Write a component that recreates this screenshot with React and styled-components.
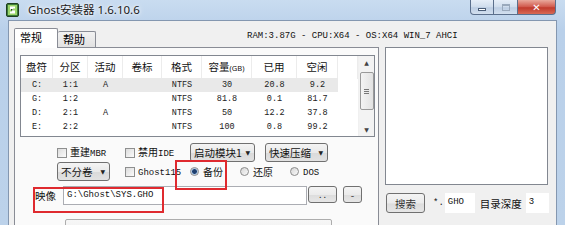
import React from 'react'
import styled, { createGlobalStyle } from 'styled-components'

const GlobalStyle = createGlobalStyle`
  html, body { margin: 0; padding: 0; overflow: hidden; background: #bcd2ea; }
  * { box-sizing: border-box; }
`

const CJK = `"Noto Sans CJK SC", "Noto Sans", sans-serif`
const MONO = `"Liberation Mono", "DejaVu Sans Mono", "Noto Sans CJK SC", monospace`

const Window = styled.div`
  width: 565px;
  height: 225px;
  overflow: hidden;
  display: flex;
  flex-direction: column;
  background: linear-gradient(#c9dcf0, #b9d0ea 30px, #bcd2ea);
  font-family: ${CJK};
  color: #111;
`

const TitleBar = styled.div`
  height: 20px;
  flex: none;
  display: flex;
  align-items: flex-start;
`

const AppIcon = styled.svg`
  margin: 3px 0 0 6px;
  flex: none;
`

const Title = styled.div`
  margin-left: 9px;
  line-height: 20px;
  font-size: 11.5px;
  font-family: "Noto Sans", ${CJK};
  color: #1a1a1a;
  text-shadow: 0 0 6px #fff, 0 0 3px #fff;
`

const Controls = styled.div`
  margin-left: auto;
  margin-right: 9px;
  display: flex;
`

const CtrlBtn = styled.div`
  width: ${p => p.$w}px;
  height: 15px;
  border: 1px solid #5b6f8c;
  border-top: none;
  border-left: ${p => (p.$first ? '1px solid #5b6f8c' : 'none')};
  border-radius: ${p => (p.$first ? '0 0 0 4px' : p.$close ? '0 0 4px 0' : '0')};
  background: ${p =>
    p.$close
      ? 'linear-gradient(#e9a99c, #d0574a 50%, #c03a2c 55%, #d86a55)'
      : 'linear-gradient(#e6eef8, #cfdcec 50%, #bccde3 55%, #d3e0ef)'};
  display: flex;
  align-items: center;
  justify-content: center;
  font-family: "DejaVu Sans", sans-serif;
  font-size: ${p => (p.$close ? 10 : 8)}px;
  font-weight: bold;
  color: ${p => (p.$close ? '#fff' : '#3b4d66')};
`

const MinGlyph = styled.span`
  width: 8px;
  height: 3px;
  margin-top: 4px;
  background: #fff;
  border: 1px solid #4a5d78;
`

const MaxGlyph = styled.span`
  width: 8px;
  height: 7px;
  border: 1px solid #9aa9bc;
  border-top-width: 2px;
`

const Frame = styled.div`
  flex: 1;
  padding: 0 8px;
  display: flex;
`

const Body = styled.div`
  flex: 1;
  background: #f0f0f0;
  border: 1px solid #8497b0;
  border-bottom: none;
  display: flex;
  flex-direction: column;
  padding: 0 8px 0 5px;
`

const TopRow = styled.div`
  height: 26px;
  display: flex;
  align-items: flex-end;
  flex: none;
`

const Tab = styled.div`
  width: ${p => p.$w}px;
  height: ${p => (p.$active ? 20 : 16)}px;
  border: 1px solid #898c95;
  border-bottom: none;
  border-left: ${p => (p.$active ? '1px solid #898c95' : 'none')};
  background: ${p => (p.$active ? '#ffffff' : 'linear-gradient(#f2f2f2, #e1e1e1)')};
  margin-bottom: ${p => (p.$active ? -1 : 0)}px;
  position: relative;
  z-index: ${p => (p.$active ? 2 : 1)};
  border-radius: 2px 2px 0 0;
  font-size: 11px;
  line-height: ${p => (p.$active ? 17 : 15)}px;
  padding-left: 5px;
  color: #000;
`

const SysInfo = styled.div`
  margin-left: 151px;
  margin-bottom: 5px;
  font-family: ${MONO};
  font-size: 9px;
  line-height: 12px;
  white-space: nowrap;
  color: #111;
`

const MainRow = styled.div`
  flex: 1;
  display: flex;
  gap: 6px;
`

const Pane = styled.div`
  width: 365px;
  flex: none;
  border: 1px solid #898c95;
  border-bottom: none;
  background: #fafafa;
  padding: 7px 3px 0 5px;
  display: flex;
  flex-direction: column;
`

const ListView = styled.div`
  height: 82px;
  border: 1px solid #828790;
  background: #fff;
  display: flex;
  flex: none;
`

const TableArea = styled.div`
  flex: 1;
  display: flex;
  flex-direction: column;
`

const HeaderRow = styled.div`
  height: 22px;
  display: grid;
  grid-template-columns: 32px 35px 35px 39px 40px 50px 45px 41px 1fr;
`

const HeadCell = styled.div`
  border-right: 1px solid #ececec;
  text-align: center;
  font-size: 10.5px;
  line-height: 22px;
  color: #111;
  white-space: nowrap;
`

const Small = styled.span`
  font-size: 7.5px;
  font-family: "Noto Sans", sans-serif;
`

const DataRow = styled.div`
  height: 14px;
  width: 317px;
  display: grid;
  grid-template-columns: 32px 35px 35px 39px 40px 50px 45px 41px;
  background: ${p => (p.$sel ? '#e9e9e9' : 'transparent')};
`

const Cell = styled.div`
  text-align: center;
  font-family: ${MONO};
  font-size: 8.5px;
  line-height: 14px;
  color: #222;
`

const ScrollBar = styled.div`
  width: 16px;
  flex: none;
  background: #f3f3f3;
  border-left: 1px solid #f0f0f0;
  display: flex;
  flex-direction: column;
  align-items: center;
  padding: 0 1px;
`

const Arrow = styled.div`
  height: ${p => p.$h}px;
  font-size: 6px;
  line-height: ${p => p.$h}px;
  color: #444;
  font-family: "DejaVu Sans", sans-serif;
`

const Thumb = styled.div`
  width: 14px;
  height: 38px;
  margin-top: 2px;
  border: 1px solid #9a9a9a;
  border-radius: 2px;
  background: linear-gradient(90deg, #f4f4f4, #e2e2e2);
  display: flex;
  flex-direction: column;
  align-items: center;
  justify-content: center;
  gap: 1px;
`

const Grip = styled.span`
  width: 5px;
  height: 1px;
  background: #777;
`

const OptRow = styled.div`
  display: flex;
  align-items: center;
  height: 19px;
  margin-top: ${p => p.$mt}px;
  padding-left: ${p => p.$pl}px;
  flex: none;
`

const CheckItem = styled.div`
  width: ${p => p.$w}px;
  display: flex;
  align-items: center;
  flex: none;
`

const Box = styled.span`
  width: 10px;
  height: 10px;
  border: 1px solid #8e8f8f;
  background: linear-gradient(135deg, #dcdcdc, #fbfbfb);
  margin-right: 3px;
  flex: none;
`

const Label = styled.span`
  font-size: 10px;
  line-height: 12px;
  white-space: nowrap;
  color: #111;
`

const Ascii = styled.span`
  font-family: ${MONO};
  font-size: 9px;
`

const Select = styled.div`
  width: ${p => p.$w}px;
  height: 19px;
  margin-right: ${p => p.$mr || 0}px;
  flex: none;
  border: 1px solid #707070;
  border-radius: 3px;
  background: linear-gradient(#f4f4f4, #e9e9e9 50%, #dadada 55%, #e2e2e2);
  display: flex;
  align-items: center;
  justify-content: space-between;
  padding: 0 4px 0 3px;
  font-size: 10.5px;
  white-space: nowrap;
`

const Caret = styled.span`
  font-size: 6px;
  font-family: "DejaVu Sans", sans-serif;
  color: #222;
`

const RadioItem = styled.div`
  width: ${p => p.$w}px;
  margin-left: ${p => p.$ml || 0}px;
  display: flex;
  align-items: center;
  position: relative;
  flex: none;
  ${p =>
    p.$marked &&
    `&::after {
      content: '';
      position: absolute;
      left: -15px;
      top: -6px;
      width: 48px;
      height: 26px;
      border: 2px solid #df2a2f;
    }`}
`

const Radio = styled.span`
  width: 9px;
  height: 9px;
  border-radius: 50%;
  border: 1px solid #8a8a8a;
  background: ${p =>
    p.$on
      ? 'radial-gradient(circle, #1f3f6e 0 2px, #7aa3cf 2.5px, #e8eef5 3.5px)'
      : 'linear-gradient(135deg, #d6d6d6, #fafafa)'};
  margin-right: 4px;
  flex: none;
`

const FieldLabel = styled.div`
  width: 28px;
  flex: none;
  font-size: 10.5px;
  position: relative;
  line-height: 19px;
  &::after {
    content: '';
    position: absolute;
    left: -2px;
    top: 1px;
    width: 127px;
    height: 22px;
    border: 2px solid #df2a2f;
    z-index: 2;
  }
`

const TextInput = styled.div`
  width: ${p => p.$w}px;
  height: ${p => p.$h || 19}px;
  flex: none;
  margin-left: ${p => p.$ml || 0}px;
  border: ${p => (p.$flat ? 'none' : '1px solid #abadb3')};
  background: #fff;
  font-family: ${MONO};
  font-size: 9px;
  line-height: ${p => (p.$h || 19) - 2}px;
  padding-left: 3px;
  white-space: nowrap;
`

const SmallBtn = styled.div`
  width: ${p => p.$w}px;
  height: ${p => p.$h || 17}px;
  margin-left: ${p => p.$ml}px;
  flex: none;
  border: 1px solid #707070;
  border-radius: 3px;
  background: linear-gradient(#f4f4f4, #ebebeb 50%, #dddddd 55%, #e6e6e6);
  display: flex;
  align-items: center;
  justify-content: center;
  font-size: ${p => p.$fs || 9}px;
  color: #333;
  align-self: flex-start;
`

const BottomBox = styled.div`
  margin: 14px 0 0 45px;
  width: 267px;
  height: 22px;
  border: 1px solid #adadad;
  border-radius: 2px;
  background: linear-gradient(#f7f7f7, #ececec);
  flex: none;
`

const RightCol = styled.div`
  width: 163px;
  flex: none;
  display: flex;
  flex-direction: column;
`

const ListBox = styled.div`
  height: 138px;
  border: 1px solid #828790;
  background: #fff;
`

const SearchRow = styled.div`
  margin-top: 8px;
  height: 20px;
  display: flex;
  align-items: center;
`

const Text = styled.span`
  margin-left: ${p => p.$ml || 0}px;
  font-size: ${p => p.$fs || 10.5}px;
  font-family: ${p => (p.$mono ? MONO : CJK)};
  white-space: nowrap;
  flex: none;
`

const columns = ['盘符', '分区', '活动', '卷标', '格式', null, '已用', '空闲']
const rows = [
  ['C:', '1:1', 'A', '', 'NTFS', '30', '20.8', '9.2'],
  ['G:', '1:2', '', '', 'NTFS', '81.8', '0.1', '81.7'],
  ['D:', '2:1', 'A', '', 'NTFS', '50', '12.2', '37.8'],
  ['E:', '2:2', '', '', 'NTFS', '100', '0.8', '99.2'],
]

function GhostIcon() {
  return (
    <AppIcon width="13" height="14" viewBox="0 0 13 14">
      <rect x="0.5" y="0.5" width="12" height="13" rx="1.5" fill="#3c7a3a" stroke="#1f3f1e" />
      <rect x="2" y="2" width="9" height="10" fill="#9bd66b" />
      <path d="M4 3.5 h5 v2 h-2 v2 h2 v3 h-5 v-2 h2 v-2 h-2 z" fill="#fff" />
      <rect x="5" y="6" width="1.5" height="1.5" fill="#1f3f1e" />
    </AppIcon>
  )
}

export default function App() {
  return (
    <>
      <GlobalStyle />
      <Window>
        <TitleBar>
          <GhostIcon />
          <Title>Ghost安装器 1.6.10.6</Title>
          <Controls>
            <CtrlBtn $w={24} $first><MinGlyph /></CtrlBtn>
            <CtrlBtn $w={24}><MaxGlyph /></CtrlBtn>
            <CtrlBtn $w={38} $close>✕</CtrlBtn>
          </Controls>
        </TitleBar>
        <Frame>
          <Body>
            <TopRow>
              <Tab $w={44} $active>常规</Tab>
              <Tab $w={38}>帮助</Tab>
              <SysInfo>RAM:3.87G - CPU:X64 - OS:X64 WIN_7 AHCI</SysInfo>
            </TopRow>
            <MainRow>
              <Pane>
                <ListView>
                  <TableArea>
                    <HeaderRow>
                      {columns.map((c, i) => (
                        <HeadCell key={i}>
                          {c || (<>容量<Small>(GB)</Small></>)}
                        </HeadCell>
                      ))}
                      <HeadCell />
                    </HeaderRow>
                    {rows.map((r, i) => (
                      <DataRow key={i} $sel={i === 0}>
                        {r.map((v, j) => <Cell key={j}>{v}</Cell>)}
                      </DataRow>
                    ))}
                  </TableArea>
                  <ScrollBar>
                    <Arrow $h={14}>▲</Arrow>
                    <Thumb><Grip /><Grip /><Grip /></Thumb>
                    <div style={{ flex: 1 }} />
                    <Arrow $h={12}>▼</Arrow>
                  </ScrollBar>
                </ListView>

                <OptRow $mt={6} $pl={37}>
                  <CheckItem $w={68}><Box /><Label>重建<Ascii>MBR</Ascii></Label></CheckItem>
                  <CheckItem $w={65}><Box /><Label>禁用<Ascii>IDE</Ascii></Label></CheckItem>
                  <Select $w={65} $mr={10}>启动模块1<Caret>▼</Caret></Select>
                  <Select $w={63}>快速压缩<Caret>▼</Caret></Select>
                </OptRow>
                <OptRow $mt={0} $pl={37}>
                  <Select $w={53} $mr={15}>不分卷<Caret>▼</Caret></Select>
                  <CheckItem $w={51}><Box /><Label><Ascii>Ghost115</Ascii></Label></CheckItem>
                  <RadioItem $w={50} $ml={14} $marked><Radio $on /><Label>备份</Label></RadioItem>
                  <RadioItem $w={50}><Radio /><Label>还原</Label></RadioItem>
                  <RadioItem $w={40}><Radio /><Label><Ascii>DOS</Ascii></Label></RadioItem>
                </OptRow>
                <OptRow $mt={5} $pl={15}>
                  <FieldLabel>映像</FieldLabel>
                  <TextInput $w={244}>G:\Ghost\SYS.GHO</TextInput>
                  <SmallBtn $w={29} $ml={1}>. .</SmallBtn>
                  <SmallBtn $w={19} $ml={6} $fs={10}>-</SmallBtn>
                </OptRow>
                <BottomBox />
              </Pane>
              <RightCol>
                <ListBox />
                <SearchRow>
                  <SmallBtn $w={39} $h={20} $ml={1} $fs={10.5}>搜索</SmallBtn>
                  <Text $ml={8} $mono $fs={9}>*.</Text>
                  <TextInput $w={30} $h={20} $ml={1} $flat>GHO</TextInput>
                  <Text $ml={5}>目录深度</Text>
                  <TextInput $w={23} $h={20} $ml={4} $flat>3</TextInput>
                </SearchRow>
              </RightCol>
            </MainRow>
          </Body>
        </Frame>
      </Window>
    </>
  )
}
